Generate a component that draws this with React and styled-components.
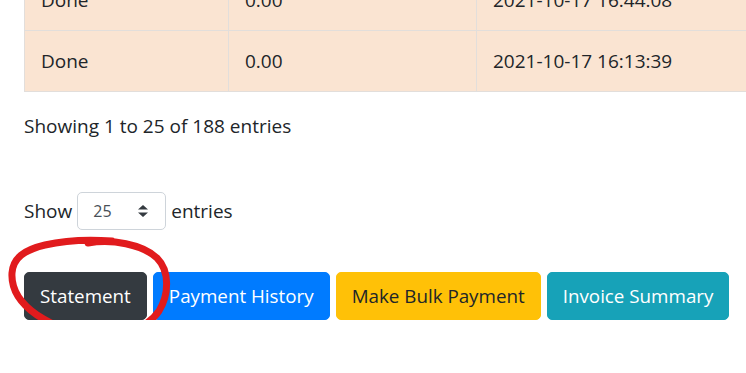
import styled, { createGlobalStyle } from "styled-components";

const GlobalStyle = createGlobalStyle`
  html, body {
    margin: 0;
    padding: 0;
    background: #fff;
    overflow: hidden;
  }
  body {
    font-family: "Open Sans", "Noto Sans", sans-serif;
    font-size: 19px;
    color: #212529;
  }
`;

const Page = styled.div`
  margin-top: -31px;
  padding-left: 24px;
  width: 900px;
`;

const Table = styled.table`
  border-collapse: collapse;
  width: 860px;
`;

const Cell = styled.td`
  box-sizing: border-box;
  width: ${(p) => p.$w || "auto"};
  padding: 15px 16px;
  line-height: 30px;
  background: #fae4d2;
  border: 1px solid #e2dedb;
  text-align: left;
  white-space: nowrap;
`;

const Info = styled.div`
  padding-top: 19px;
  line-height: 30px;
`;

const LengthRow = styled.label`
  display: flex;
  align-items: center;
  gap: 5px;
  margin-top: 51px;
  line-height: 30px;
`;

const SelectBox = styled.div`
  width: 89px;
  height: 38px;
  box-sizing: border-box;
  display: flex;
  align-items: center;
  justify-content: space-between;
  padding: 0 16px 0 15px;
  border: 1px solid #ced4da;
  border-radius: 5px;
  font-size: 16px;
  color: #495057;
  background: #fff;
`;

const ButtonBar = styled.div`
  position: relative;
  display: flex;
  gap: 6px;
  margin-top: 42px;
`;

const tones = {
  dark: { bg: "#343a40", fg: "#fff" },
  primary: { bg: "#007bff", fg: "#fff" },
  warning: { bg: "#ffc107", fg: "#212529" },
  info: { bg: "#17a2b8", fg: "#fff" },
};

const Button = styled.button`
  font-family: inherit;
  font-size: 18.8px;
  line-height: 30px;
  padding: 8px 15px;
  border: 1px solid ${(p) => tones[p.$tone].bg};
  border-radius: 5px;
  background: ${(p) => tones[p.$tone].bg};
  color: ${(p) => tones[p.$tone].fg};
  white-space: nowrap;
  cursor: pointer;
`;

const Scribble = styled.svg`
  position: absolute;
  left: -16px;
  top: -36px;
  width: 170px;
  height: 106px;
  overflow: visible;
  pointer-events: none;
`;

const rows = [
  ["Done", "0.00", "2021-10-17 16:44:08"],
  ["Done", "0.00", "2021-10-17 16:13:39"],
];

const SortArrows = () => (
  <svg width="12" height="12" viewBox="0 0 12 12">
    <path d="M6 0 L11 4.5 H1 Z M1 7.5 H11 L6 12 Z" fill="#343a40" />
  </svg>
);

export default function App() {
  return (
    <>
      <GlobalStyle />
      <Page>
        <Table>
          <tbody>
            {rows.map((r, i) => (
              <tr key={i}>
                <Cell $w="204px">{r[0]}</Cell>
                <Cell $w="248px">{r[1]}</Cell>
                <Cell>{r[2]}</Cell>
              </tr>
            ))}
          </tbody>
        </Table>
        <Info>Showing 1 to 25 of 188 entries</Info>
        <LengthRow>
          Show
          <SelectBox>
            <span>25</span>
            <SortArrows />
          </SelectBox>
          entries
        </LengthRow>
        <ButtonBar>
          <Button $tone="dark">Statement</Button>
          <Button $tone="primary">Payment History</Button>
          <Button $tone="warning">Make Bulk Payment</Button>
          <Button $tone="info">Invoice Summary</Button>
          <Scribble viewBox="8 236 170 106">
            <path
              d="M88 243 C112 239, 142 244, 157 258 C170 271, 169 295, 159 311 C148 327, 125 336, 104 336 C80 336, 55 327, 37 315 C21 304, 11 290, 12 273 C13 258, 24 250, 45 245 C62 241, 85 239, 112 241"
              fill="none"
              stroke="#e11b1d"
              strokeWidth="7"
              strokeLinecap="round"
              strokeLinejoin="round"
            />
          </Scribble>
        </ButtonBar>
      </Page>
    </>
  );
}
